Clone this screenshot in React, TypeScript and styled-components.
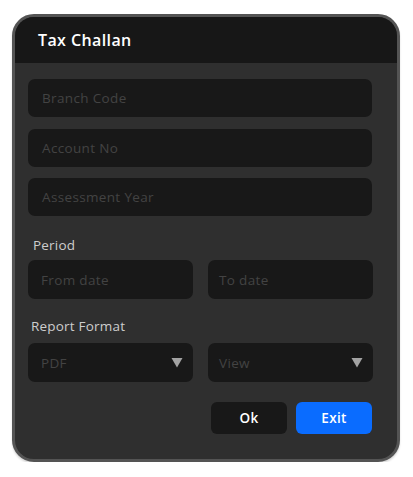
import React from "react";
import styled, { createGlobalStyle } from "styled-components";

const Global = createGlobalStyle`
  html, body { margin: 0; padding: 0; background: #ffffff; }
  * { box-sizing: border-box; }
  body { font-family: "Open Sans", "Noto Sans", sans-serif; }
`;

const Page = styled.div`
  padding: 14px 0 0 12px;
`;

const Card = styled.div`
  width: 388px;
  height: 448px;
  background: #2f2f2f;
  border: 3px solid #545454;
  border-radius: 22px;
  overflow: hidden;
  display: flex;
  flex-direction: column;
  box-shadow: 0 2px 2px rgba(0, 0, 0, 0.15);
`;

const Header = styled.div`
  height: 46px;
  background: #171717;
  display: flex;
  align-items: center;
  padding: 0 0 0 23px;
  color: #ffffff;
  font-size: 16px;
  font-weight: 600;
  letter-spacing: 0.4px;
`;

const Body = styled.div`
  padding: 16px 25px 0 13px;
  display: flex;
  flex-direction: column;
`;

const Stack = styled.div`
  display: flex;
  flex-direction: column;
  gap: 11.5px;
`;

const Field = styled.div<{ $pl?: number; $h?: number }>`
  height: ${(p) => p.$h ?? 38}px;
  background: #181818;
  border-radius: 7px;
  display: flex;
  align-items: center;
  justify-content: space-between;
  padding: 0 10px 0 ${(p) => p.$pl ?? 14}px;
  color: #434343;
  font-size: 13.5px;
  letter-spacing: 0.35px;
`;

const Label = styled.div<{ $ml: number; $mt: number; $mb: number }>`
  margin: ${(p) => p.$mt}px 0 ${(p) => p.$mb}px ${(p) => p.$ml}px;
  color: #cdcdcd;
  font-size: 13.5px;
  font-weight: 500;
  letter-spacing: 0.2px;
  line-height: 18px;
`;

const Row = styled.div`
  display: grid;
  grid-template-columns: 165px 165px;
  column-gap: 15px;
`;

const Arrow = styled.svg`
  width: 12px;
  height: 11px;
`;

const Actions = styled.div`
  margin-top: 20px;
  display: flex;
  justify-content: flex-end;
  gap: 9px;
`;

const Button = styled.button<{ $primary?: boolean }>`
  width: 76px;
  height: 32px;
  border: none;
  border-radius: 6px;
  background: ${(p) => (p.$primary ? "#0a6cff" : "#181818")};
  color: #ffffff;
  font-family: inherit;
  font-size: 13.5px;
  font-weight: 600;
  letter-spacing: 0.3px;
  cursor: pointer;
`;

const Caret = () => (
  <Arrow viewBox="0 0 12 11">
    <path d="M0.5 1 L11.5 1 L6 10.5 Z" fill="#a3a3a3" />
  </Arrow>
);

export default function App() {
  return (
    <>
      <Global />
      <Page>
        <Card>
          <Header>Tax Challan</Header>
          <Body>
            <Stack>
              <Field>Branch Code</Field>
              <Field>Account No</Field>
              <Field>Assessment Year</Field>
            </Stack>
            <Label $ml={5} $mt={20} $mb={6}>Period</Label>
            <Row>
              <Field $pl={13} $h={39}>From date</Field>
              <Field $pl={11} $h={39}>To date</Field>
            </Row>
            <Label $ml={3} $mt={18} $mb={8}>Report Format</Label>
            <Row>
              <Field $pl={13} $h={39}>
                <span>PDF</span>
                <Caret />
              </Field>
              <Field $pl={11} $h={39}>
                <span>View</span>
                <Caret />
              </Field>
            </Row>
            <Actions>
              <Button>Ok</Button>
              <Button $primary>Exit</Button>
            </Actions>
          </Body>
        </Card>
      </Page>
    </>
  );
}
